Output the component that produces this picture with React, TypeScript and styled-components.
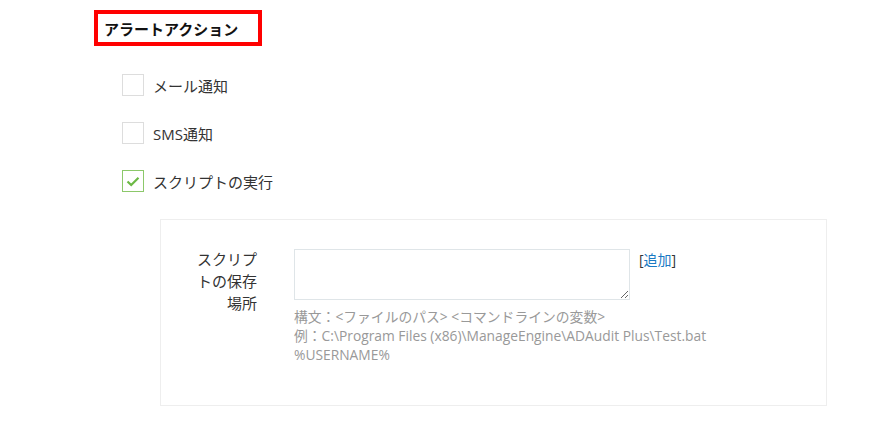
import React from "react";
import styled, { createGlobalStyle } from "styled-components";

const Global = createGlobalStyle`
  html, body { margin: 0; padding: 0; background: #fff; }
  body { font-family: "Open Sans", "Noto Sans CJK JP", sans-serif; color: #333; }
`;

const Page = styled.div`
  padding: 10px 0 0 94px;
  width: 891px;
  box-sizing: border-box;
`;

const Title = styled.div`
  display: inline-flex;
  align-items: center;
  box-sizing: border-box;
  width: 168px;
  height: 36px;
  border: 4px solid #f00;
  padding-left: 6px;
  font-size: 15px;
  font-weight: bold;
  color: #111;
`;

const Options = styled.div`
  display: flex;
  flex-direction: column;
  gap: 26px;
  margin: 28px 0 0 28px;
`;

const OptionRow = styled.label`
  display: flex;
  align-items: center;
  gap: 9px;
  font-size: 15px;
  color: #333;
`;

const Box = styled.span<{ $checked?: boolean }>`
  width: 22px;
  height: 22px;
  box-sizing: border-box;
  border: 1px solid ${(p) => (p.$checked ? "#8cc86a" : "#ddd")};
  background: #fff;
  display: flex;
  align-items: center;
  justify-content: center;
`;

const Panel = styled.div`
  margin: 27px 0 0 66px;
  width: 667px;
  height: 187px;
  box-sizing: border-box;
  border: 1px solid #eeeeee;
  display: flex;
  padding: 29px 0 0 35px;
`;

const FieldLabel = styled.div`
  width: 61px;
  text-align: right;
  font-size: 15px;
  line-height: 22px;
  color: #333;
  margin-top: -1px;
`;

const FieldBody = styled.div`
  margin-left: 37px;
  display: flex;
  flex-direction: column;
`;

const InputRow = styled.div`
  display: flex;
  align-items: flex-start;
  gap: 9px;
`;

const Area = styled.textarea`
  width: 336px;
  height: 51px;
  box-sizing: border-box;
  border: 1px solid #dfe5e8;
  margin: 0;
  font-family: inherit;
`;

const AddLink = styled.span`
  font-size: 14px;
  color: #333;
  line-height: 22px;
  a { color: #1a7ac4; text-decoration: none; }
`;

const Help = styled.div`
  margin-top: 7px;
  font-size: 13.8px;
  line-height: 19px;
  color: #999;
`;

const Check = () => (
  <svg width="14" height="11" viewBox="0 0 14 11">
    <path d="M1.5 5.5 L5.2 9 L12.5 1.8" fill="none" stroke="#6cb945" strokeWidth="2.2" />
  </svg>
);

export default function App() {
  return (
    <Page>
      <Global />
      <Title>アラートアクション</Title>
      <Options>
        <OptionRow><Box />メール通知</OptionRow>
        <OptionRow><Box />SMS通知</OptionRow>
        <OptionRow><Box $checked><Check /></Box>スクリプトの実行</OptionRow>
      </Options>
      <Panel>
        <FieldLabel>スクリプトの保存場所</FieldLabel>
        <FieldBody>
          <InputRow>
            <Area />
            <AddLink>[<a href="#">追加</a>]</AddLink>
          </InputRow>
          <Help>
            構文：&lt;ファイルのパス&gt; &lt;コマンドラインの変数&gt;<br />
            例：C:\Program Files (x86)\ManageEngine\ADAudit Plus\Test.bat<br />
            %USERNAME%
          </Help>
        </FieldBody>
      </Panel>
    </Page>
  );
}
